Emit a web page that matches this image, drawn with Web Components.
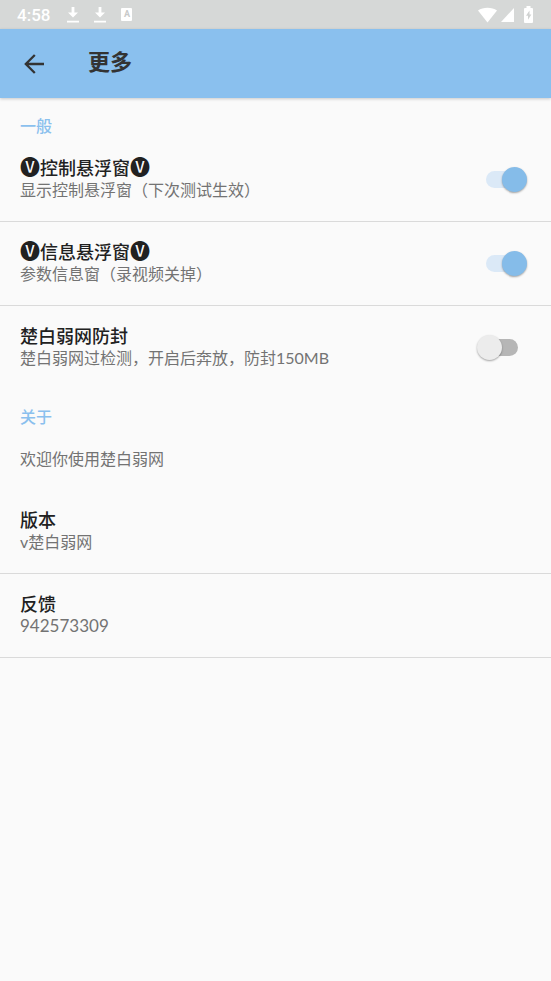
<!DOCTYPE html>
<html lang="zh-CN">
<head>
<meta charset="utf-8">
<meta name="viewport" content="width=device-width, initial-scale=1">
<title>更多</title>
<style>
body { margin: 0; background: #fafafa; color: #212121; font-family: Lato, "Noto Sans CJK SC", sans-serif; --accent: #8ac0ee; }
</style>
</head>
<body>
<more-screen></more-screen>
<script>
function define(name, html, setup) {
  const template = document.createElement('template');
  template.innerHTML = html;
  customElements.define(name, class extends HTMLElement {
    constructor() {
      super();
      this.attachShadow({ mode: 'open' }).append(template.content.cloneNode(true));
    }
    connectedCallback() { if (setup) setup(this, this.shadowRoot); }
  });
}

define('status-bar', `
<style>
:host { display: flex; align-items: center; justify-content: space-between; height: 29px; padding: 0 17px; background: #d6d8d7; color: #fff; font: 500 17px/29px Roboto, sans-serif; }
div { display: flex; align-items: center; }
span { margin-right: 17px; padding-top: 2px; }
svg { display: block; fill: #fff; }
.down { margin-right: 15px; }
.app { display: grid; place-items: center; width: 11px; height: 13px; border-radius: 1px; background: #fff; color: #c8cac9; font: 700 9px/11px Roboto, sans-serif; }
.wifi { margin-right: 4px; }
.signal { margin-right: 10px; }
.battery { margin-right: 1px; }
</style>
<div>
  <span>4:58</span>
  <svg class="down" width="12" height="17" viewBox="0 0 12 17"><path d="M4.6 1h2.8v5.5H11l-5 5-5-5h3.6zM0 14.7h12v1.8H0z"/></svg>
  <svg class="down" width="12" height="17" viewBox="0 0 12 17"><path d="M4.6 1h2.8v5.5H11l-5 5-5-5h3.6zM0 14.7h12v1.8H0z"/></svg>
  <div class="app">A</div>
</div>
<div>
  <svg class="wifi" width="19" height="16" viewBox="0 0 19 16"><path d="M0 3.5C5-.2 14-.2 19 3.5L9.5 15.5z"/></svg>
  <svg class="signal" width="13" height="15" viewBox="0 0 13 15"><path d="M13 1v14H0z"/></svg>
  <svg class="battery" width="9" height="17" viewBox="0 0 9 17"><path d="M2.5 0h4v2H8q1 0 1 1v13q0 1-1 1H1q-1 0-1-1V3q0-1 1-1h1.5z"/><path fill="#d0d2d1" d="M5.5 4.5 2 9.8h2v4l3.4-5.3H5.5z"/></svg>
</div>`);

define('app-bar', `
<style>
:host { display: flex; align-items: center; position: relative; height: 69px; padding: 0 20px; background: var(--accent); color: #333; box-shadow: 0 1px 3px rgba(0,0,0,.2); box-sizing: border-box; }
button { display: grid; place-items: center; width: 28px; height: 28px; margin: 0 40px 0 0; padding: 0; border: 0; background: none; color: inherit; }
h1 { margin: 0; padding-bottom: 4px; font-size: 22px; line-height: 32px; font-weight: 700; }
</style>
<button type="button" aria-label="返回"><svg width="20" height="20" viewBox="0 0 20 20" fill="none" stroke="currentColor" stroke-width="2.3"><path d="M20 10H2M10.8 1 1.8 10l9 9"/></svg></button>
<h1><slot></slot></h1>`);

define('section-title', `
<style>
:host { display: block; padding: 17px 20px 1px; color: var(--accent); }
h2 { margin: 0; font-size: 16px; line-height: 22px; font-weight: 500; }
</style>
<h2><slot></slot></h2>`);

define('badge-letter', `<style>:host { display: inline; font-size: 20px; line-height: 20px; }</style><slot></slot>`);

define('setting-row', `
<style>
:host { display: flex; align-items: center; padding: 19px 24px 20px 20px; }
:host([divider]) { border-bottom: 1px solid #dadada; }
label, .text { flex: 1; display: block; min-width: 0; }
.title { display: block; font-size: 18px; line-height: 22px; font-weight: 500; }
.summary { display: block; font-size: 16px; line-height: 22px; color: #737373; }
:host([numeric]) .summary { font-size: 17px; }
input { appearance: none; position: relative; flex: none; width: 50px; height: 25px; margin: 0; }
input::before { content: ""; position: absolute; left: 9px; top: 4px; width: 32px; height: 17px; border-radius: 9px; background: #b6b6b6; }
input::after { content: ""; position: absolute; left: 0; top: 0; width: 25px; height: 25px; border-radius: 50%; background: #ececec; box-shadow: 0 1px 2px rgba(0,0,0,.35); }
input:checked::before { background: #dbe9f7; }
input:checked::after { left: 25px; background: #85bce9; }
[hidden] { display: none; }
</style>
<label for="toggle"><span class="title"><slot name="title"></slot></span><span class="summary"><slot></slot></span></label>
<input id="toggle" type="checkbox" role="switch">`, (host, root) => {
  if (!host.querySelector('[slot=title]')) root.querySelector('.title').hidden = true;
  const input = root.querySelector('input');
  if (host.hasAttribute('toggle')) {
    input.checked = host.getAttribute('toggle') === 'on';
  } else {
    input.remove();
    const text = document.createElement('div');
    text.className = 'text';
    const label = root.querySelector('label');
    text.append(...label.childNodes);
    label.replaceWith(text);
  }
});

define('more-screen', `
<style>:host { display: block; }</style>
<status-bar></status-bar>
<app-bar>更多</app-bar>
<main>
  <section-title>一般</section-title>
  <setting-row toggle="on" divider><span slot="title"><badge-letter>🅥</badge-letter>控制悬浮窗<badge-letter>🅥</badge-letter></span>显示控制悬浮窗（下次测试生效）</setting-row>
  <setting-row toggle="on" divider><span slot="title"><badge-letter>🅥</badge-letter>信息悬浮窗<badge-letter>🅥</badge-letter></span>参数信息窗（录视频关掉）</setting-row>
  <setting-row toggle="off"><span slot="title">楚白弱网防封</span>楚白弱网过检测，开启后奔放，防封150MB</setting-row>
  <section-title>关于</section-title>
  <setting-row>欢迎你使用楚白弱网</setting-row>
  <setting-row divider><span slot="title">版本</span>v楚白弱网</setting-row>
  <setting-row numeric divider><span slot="title">反馈</span>942573309</setting-row>
</main>`);
</script>
</body>
</html>
